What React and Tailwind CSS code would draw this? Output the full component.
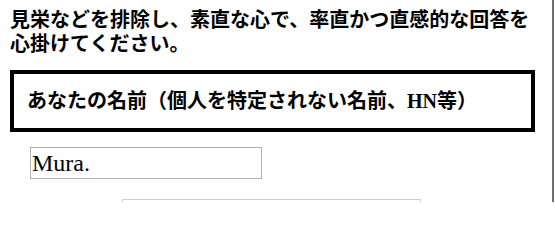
export default function App() {
  return (
    <div className="relative w-[555px] h-[202px] overflow-hidden bg-white text-black" style={{ fontFamily: '"Liberation Serif", "Noto Sans CJK JP", serif' }}>
      <div className="pl-[10px] pt-[8px]">
        <p className="text-[20px] leading-[24px] font-bold whitespace-nowrap">
          見栄などを排除し、素直な心で、率直かつ直感的な回答を
          <br />
          心掛けてください。
        </p>
        <div className="mt-[14px] w-[525px] h-[62px] border-4 border-black flex items-center pl-[13px]">
          <span className="text-[20px] leading-[24px] font-bold whitespace-nowrap">
            あなたの名前（個人を特定されない名前、HN等）
          </span>
        </div>
        <div className="ml-[20px] mt-[15px] w-[232px] h-[32px] border border-[#b0b0b0] flex items-center pl-[1px]">
          <span className="text-[24px] leading-[28px]">Mura.</span>
        </div>
        <div className="ml-[112px] mt-[20px] w-[299px] h-[30px] border border-[#cccccc]"></div>
      </div>
      <div className="absolute right-[1px] top-0 w-[2px] h-full bg-[#6e6e6e]"></div>
    </div>
  );
}
